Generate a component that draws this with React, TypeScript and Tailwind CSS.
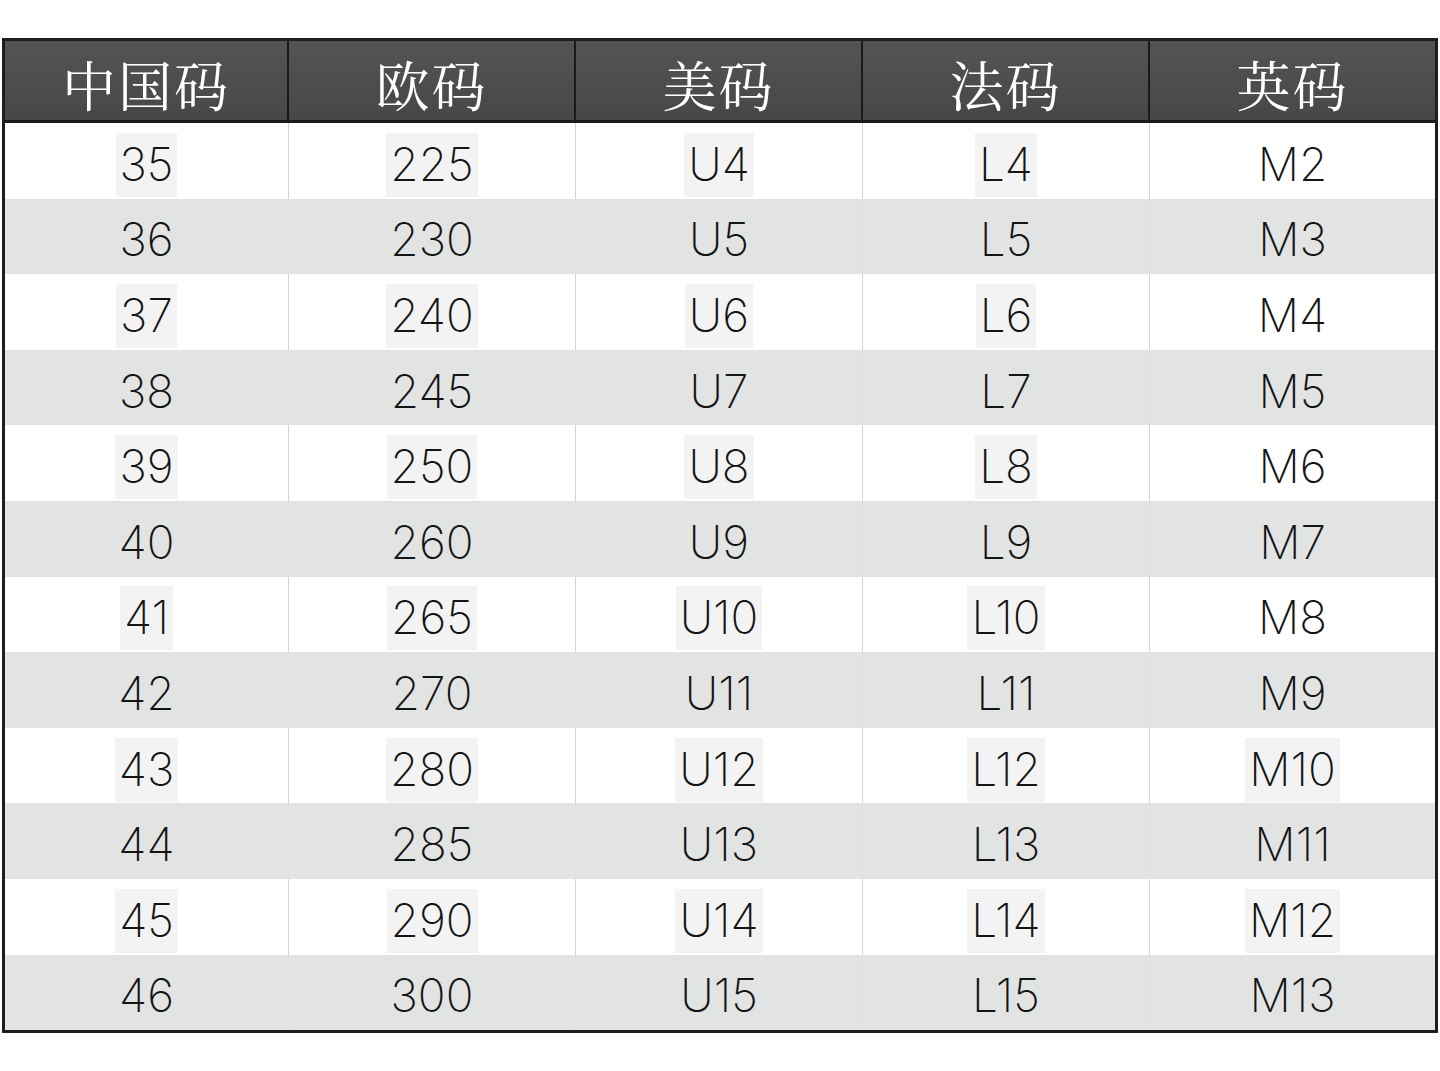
import React from "react";

const headers = ["中国码", "欧码", "美码", "法码", "英码"];
const rows: string[][] = [
  ["35", "225", "U4", "L4", "M2"],
  ["36", "230", "U5", "L5", "M3"],
  ["37", "240", "U6", "L6", "M4"],
  ["38", "245", "U7", "L7", "M5"],
  ["39", "250", "U8", "L8", "M6"],
  ["40", "260", "U9", "L9", "M7"],
  ["41", "265", "U10", "L10", "M8"],
  ["42", "270", "U11", "L11", "M9"],
  ["43", "280", "U12", "L12", "M10"],
  ["44", "285", "U13", "L13", "M11"],
  ["45", "290", "U14", "L14", "M12"],
  ["46", "300", "U15", "L15", "M13"],
];

export default function App() {
  return (
    <div className="w-[1440px] h-[1071px] bg-white pt-[38px] pl-[2px]">
      <div className="w-[1436px] border-[3px] border-[#1e1e1e] bg-white">
        <div className="grid grid-cols-[284px_287px_287px_287px_1fr] h-[82px] bg-gradient-to-b from-[#545454] to-[#474747] border-b-[3px] border-[#1a1a1a]">
          {headers.map((h, i) => (
            <div
              key={h}
              className={`flex items-center justify-center text-white text-[54px] leading-none pt-[6px] ${
                i < 4 ? "border-r-[2px] border-[#1a1a1a]" : ""
              }`}
              style={{ fontFamily: '"Noto Serif CJK SC", "Noto Sans CJK SC", serif' }}
            >
              <span className="tracking-[2px]">{h}</span>
            </div>
          ))}
        </div>
        {rows.map((r, ri) => {
          const white = ri % 2 === 0;
          return (
            <div
              key={ri}
              className={`grid grid-cols-[284px_287px_287px_287px_1fr] h-[75.6px] ${white ? "bg-white" : "bg-[#e2e3e3]"}`}
            >
              {r.map((c, ci) => {
                const box = white && (ci < 4 || c === "M10" || c === "M12");
                return (
                  <div
                    key={ci}
                    className={`flex items-center justify-center pt-[8px] ${
                      ci < 4 ? (white ? "border-r border-[#d4d4d4]" : "border-r border-[#e0e1e1]") : ""
                    }`}
                  >
                    <span
                      className={`text-[46px] font-extralight leading-none text-[#141414] px-[4px] pt-[8px] pb-[10px] ${
                        box ? "bg-[#f3f3f3]" : ""
                      }`}
                      style={{ fontFamily: 'Inter, "Noto Sans", sans-serif' }}
                    >
                      {c}
                    </span>
                  </div>
                );
              })}
            </div>
          );
        })}
      </div>
    </div>
  );
}
